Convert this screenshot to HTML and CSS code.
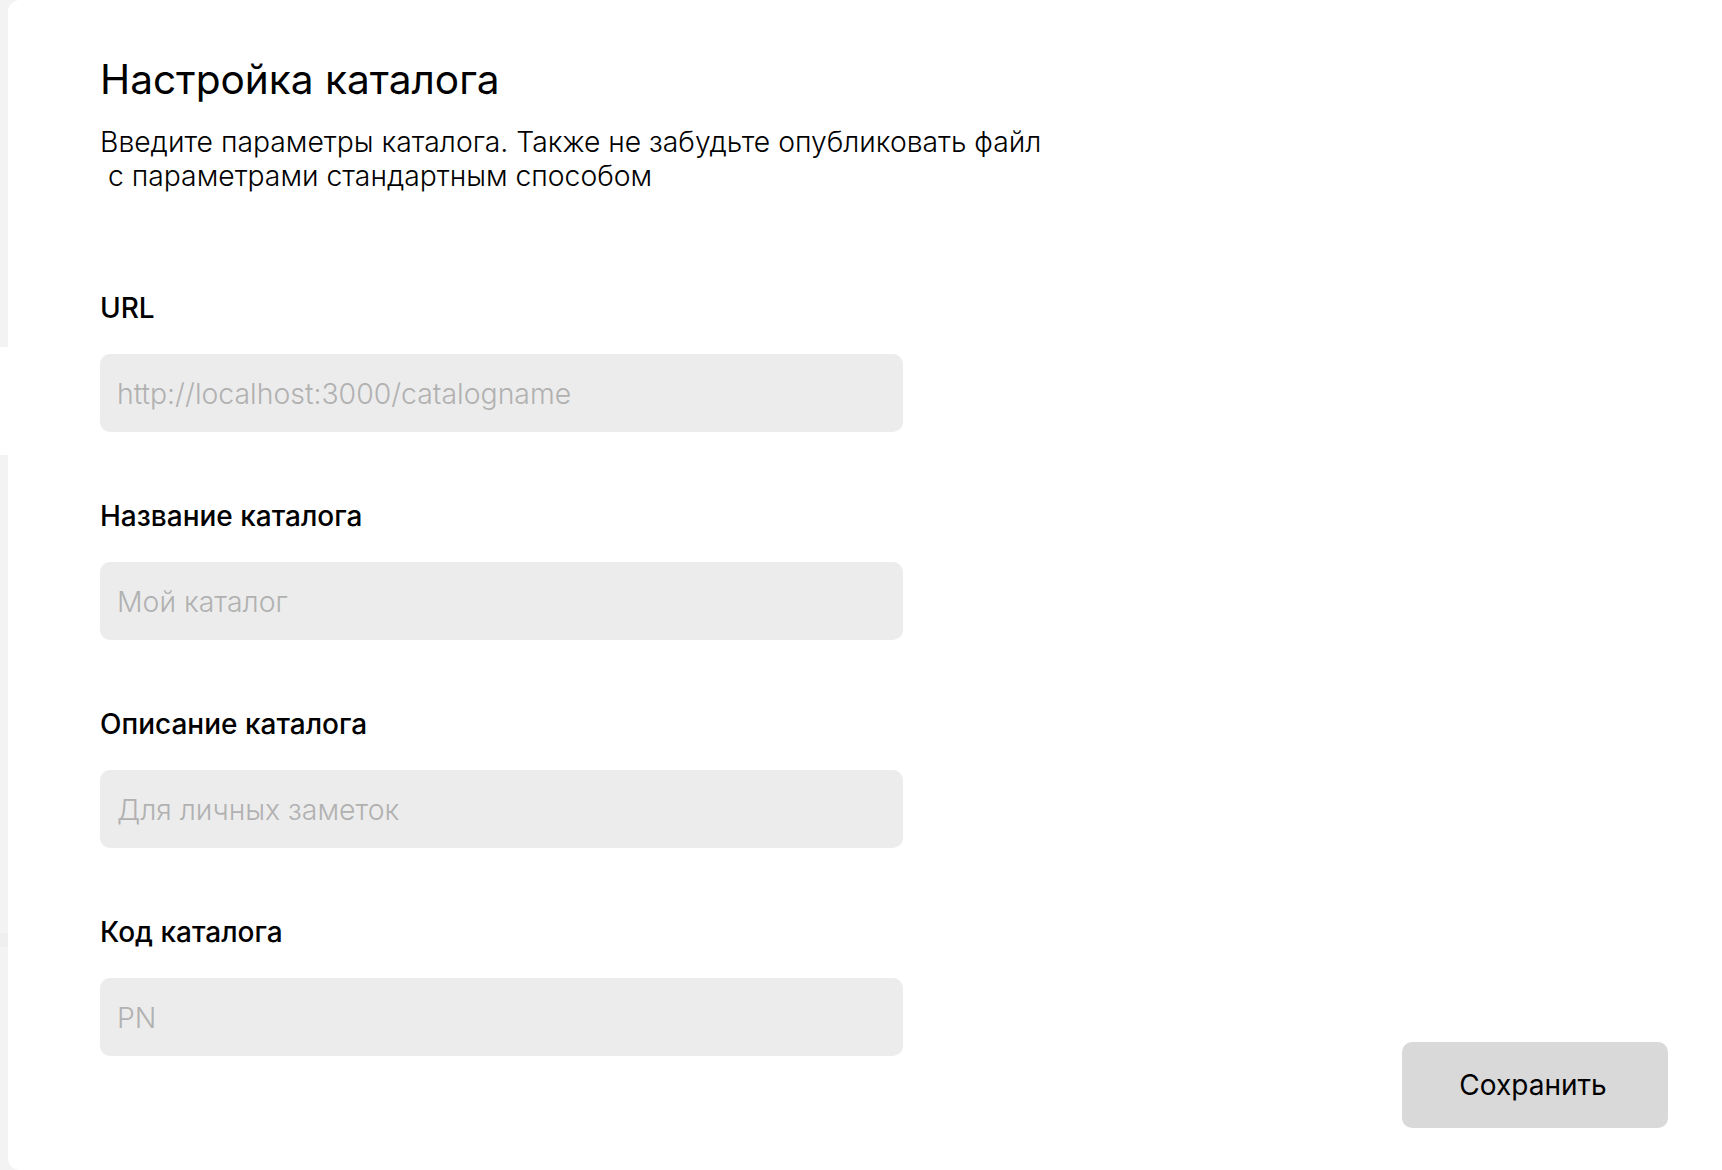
FILE: index.html
```html
<!DOCTYPE html>
<html lang="ru">
<head>
<meta charset="utf-8">
<title>Настройка каталога</title>
<link rel="stylesheet" href="styles.css">
</head>
<body>
<div class="page">
  <aside class="rail">
    <div class="rail-seg rail-top"></div>
    <div class="rail-seg rail-active"></div>
    <div class="rail-seg rail-mid"></div>
    <div class="rail-seg rail-line"></div>
    <div class="rail-seg rail-bottom"></div>
  </aside>
  <main class="card">
    <section class="form">
      <h1 class="title">Настройка каталога</h1>
      <p class="lead">Введите параметры каталога. Также не забудьте опубликовать файл<br>&nbsp;с параметрами стандартным способом</p>
      <div class="fields">
        <label class="field">
          <span class="field-label">URL</span>
          <input class="field-input" type="text" placeholder="http://localhost:3000/catalogname">
        </label>
        <label class="field">
          <span class="field-label">Название каталога</span>
          <input class="field-input" type="text" placeholder="Мой каталог">
        </label>
        <label class="field">
          <span class="field-label">Описание каталога</span>
          <input class="field-input" type="text" placeholder="Для личных заметок">
        </label>
        <label class="field">
          <span class="field-label">Код каталога</span>
          <input class="field-input" type="text" placeholder="PN">
        </label>
      </div>
    </section>
    <div class="actions">
      <button class="btn-save" type="button">Сохранить</button>
    </div>
  </main>
</div>
</body>
</html>
```

FILE: styles.css
```css
* { box-sizing: border-box; }

html, body {
  margin: 0;
  padding: 0;
  height: 100%;
}

body {
  font-family: Inter, "Noto Sans", sans-serif;
  color: #000;
  background: #f3f3f3;
}

.page {
  display: flex;
  height: 1170px;
  overflow: hidden;
}

.rail {
  width: 8px;
  flex: 0 0 8px;
  display: flex;
  flex-direction: column;
}

.rail-top { height: 347px; background: #f3f3f3; }
.rail-active { height: 108px; background: #ffffff; }
.rail-mid { height: 478px; background: #f3f3f3; }
.rail-line { height: 14px; background: #efefef; }
.rail-bottom { flex: 1; background: #f3f3f3; }

.card {
  flex: 1;
  background: #ffffff;
  border-radius: 12px 0 0 12px;
  display: flex;
  justify-content: space-between;
  padding: 56px 54px 42px 92px;
}

.form {
  width: 803px;
  display: flex;
  flex-direction: column;
}

.title {
  margin: 0;
  font-size: 40.6px;
  line-height: 48px;
  font-weight: 400;
  letter-spacing: 0;
  white-space: nowrap;
}

.lead {
  margin: 21px 0 0;
  font-size: 28.3px;
  line-height: 34px;
  font-weight: 300;
  white-space: nowrap;
}

.fields {
  margin-top: 98px;
  display: flex;
  flex-direction: column;
  gap: 67px;
}

.field {
  display: flex;
  flex-direction: column;
  gap: 29px;
}

.field-label {
  font-size: 28px;
  line-height: 34px;
  font-weight: 500;
}

.field-input {
  width: 803px;
  height: 78px;
  border: none;
  outline: none;
  border-radius: 10px;
  background: #ececec;
  padding: 0 17px;
  font-family: Inter, "Noto Sans", sans-serif;
  font-size: 28.4px;
  font-weight: 300;
  color: #000;
}

.field-input::placeholder {
  color: #b1b1b1;
  opacity: 1;
}

.actions {
  display: flex;
  align-items: flex-end;
}

.btn-save {
  width: 266px;
  height: 86px;
  border: none;
  border-radius: 10px;
  background: #d9d9d9;
  padding: 0 4px 0 0;
  font-family: Inter, "Noto Sans", sans-serif;
  font-size: 28px;
  font-weight: 400;
  color: #000;
  cursor: pointer;
}
```
